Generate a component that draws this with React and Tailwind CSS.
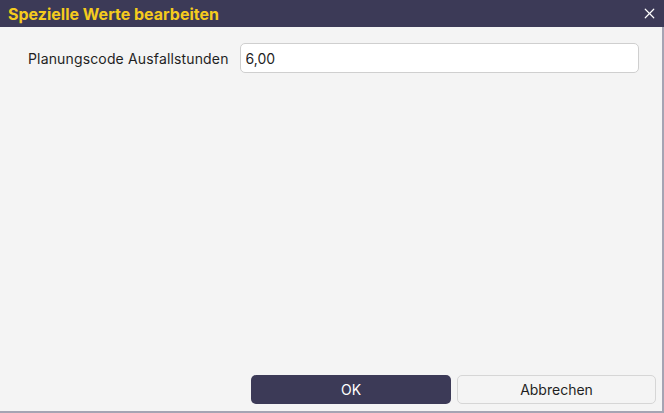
import { X } from "lucide-react";

export default function App() {
  return (
    <div className="w-[664px] h-[413px] flex flex-col bg-[#f4f4f4] font-['Inter',sans-serif]">
      <header className="h-[27px] shrink-0 bg-[#3c3a57] flex items-center justify-between pl-[8px] pr-[6px]">
        <h1 className="text-[16px] font-bold text-[#f5cb1d] leading-none">Spezielle Werte bearbeiten</h1>
        <X size={17} strokeWidth={1.7} className="text-white" />
      </header>

      <div className="flex-1 flex flex-col border-r-2 border-b-2 border-[#a5a4b3]">
        <div className="flex items-center pt-[16px] pl-[28px] pr-[23px] gap-[11px]">
          <label className="text-[14px] text-[#1f1f1f] whitespace-nowrap tracking-[0.15px]">Planungscode Ausfallstunden</label>
          <input
            defaultValue="6,00"
            className="flex-1 h-[30px] bg-white border border-[#cfcfcf] rounded-[5px] px-[5px] text-[14px] text-[#1f1f1f] outline-none"
          />
        </div>

        <div className="mt-auto flex justify-end gap-[6px] pr-[6px] pb-[7px]">
          <button className="w-[200px] h-[29px] rounded-[5px] bg-[#3c3a57] text-white text-[14px]">OK</button>
          <button className="w-[199px] h-[29px] rounded-[5px] bg-[#f4f4f4] border border-[#d6d6d6] text-[#1f1f1f] text-[14px]">Abbrechen</button>
        </div>
      </div>
    </div>
  );
}
